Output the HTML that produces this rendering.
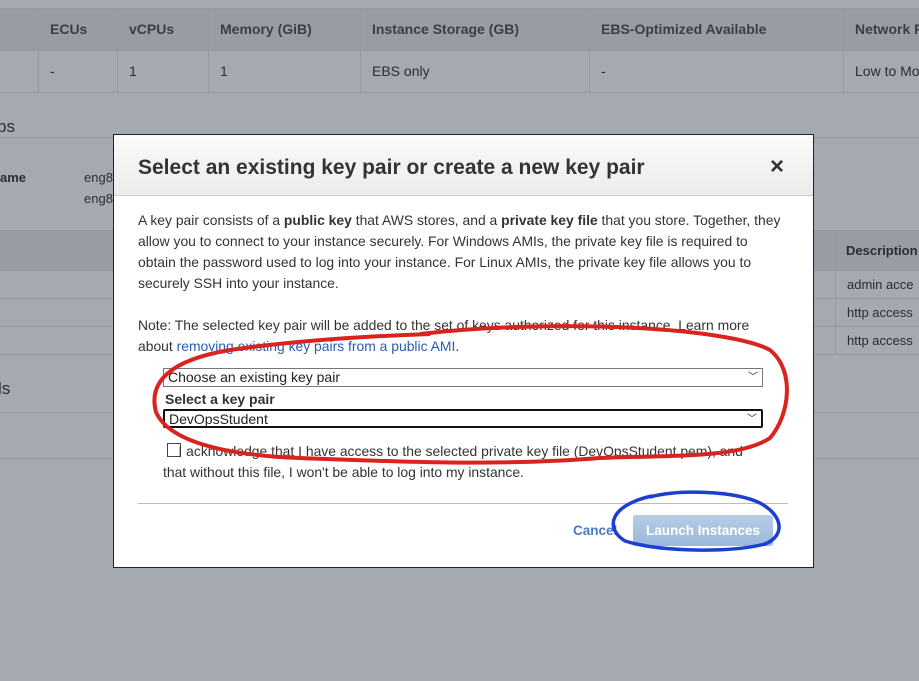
<!DOCTYPE html><html><head><style>
body{margin:0;width:919px;height:681px;background:#a5a9b0;font-family:"Liberation Sans",sans-serif;position:relative;overflow:hidden;font-size:14px;color:#2a2d33}
.a{position:absolute}
.hl{position:absolute;left:0;right:0;height:1px;background:#959aa1}
.vl{position:absolute;width:1px;background:#959aa1}
.modal{position:absolute;left:113px;top:134px;width:699px;height:432px;background:#fff;border:1px solid #222}
.mh{height:60px;background:linear-gradient(#fafafa,#ececec);border-bottom:1px solid #ccc}
.mb{font-size:13.9px;color:#333;line-height:21px;white-space:nowrap}
.sel{position:absolute;left:49px;width:600px;height:19px;border:1px solid #777;font-size:14px;line-height:17px;padding-left:4px;box-sizing:border-box;color:#222}
</style></head><body>
<div class="a" style="left:0;top:8px;width:919px;height:42px;background:#989da5"></div>
<div class="hl" style="top:8px"></div><div class="hl" style="top:50px"></div><div class="hl" style="top:92px"></div>
<div class="vl" style="left:38px;top:8px;height:84px"></div><div class="vl" style="left:117px;top:8px;height:84px"></div><div class="vl" style="left:208px;top:8px;height:84px"></div><div class="vl" style="left:360px;top:8px;height:84px"></div><div class="vl" style="left:589px;top:8px;height:84px"></div><div class="vl" style="left:843px;top:8px;height:84px"></div>
<div class="a" style="top:21px;left:50px;font-weight:bold;color:#3a3e45">ECUs</div>
<div class="a" style="top:21px;left:129px;font-weight:bold;color:#3a3e45">vCPUs</div>
<div class="a" style="top:21px;left:220px;font-weight:bold;color:#3a3e45">Memory (GiB)</div>
<div class="a" style="top:21px;left:372px;font-weight:bold;color:#3a3e45">Instance Storage (GB)</div>
<div class="a" style="top:21px;left:601px;font-weight:bold;color:#3a3e45">EBS-Optimized Available</div>
<div class="a" style="top:21px;left:855px;font-weight:bold;color:#3a3e45;white-space:nowrap">Network Pe</div>
<div class="a" style="top:63px;left:50px">-</div><div class="a" style="top:63px;left:129px">1</div><div class="a" style="top:63px;left:220px">1</div><div class="a" style="top:63px;left:372px">EBS only</div><div class="a" style="top:63px;left:601px">-</div><div class="a" style="top:63px;left:855px;white-space:nowrap">Low to Mo</div>
<div class="a" style="top:117px;left:-3px;font-size:17px">ps</div>
<div class="hl" style="top:137px"></div>
<div class="a" style="top:170px;left:0;font-weight:bold;font-size:13px">ame</div>
<div class="a" style="top:170px;left:84px;font-size:13px">eng8</div><div class="a" style="top:191px;left:84px;font-size:13px">eng8</div>
<div class="a" style="left:0;top:230px;width:919px;height:40px;background:#989da5"></div>
<div class="hl" style="top:230px"></div><div class="hl" style="top:270px"></div><div class="hl" style="top:298px"></div><div class="hl" style="top:326px"></div><div class="hl" style="top:354px"></div>
<div class="vl" style="left:835px;top:230px;height:124px"></div>
<div class="a" style="top:243px;left:846px;font-weight:bold;font-size:13px">Description</div>
<div class="a" style="top:277px;left:847px;font-size:13px">admin acce</div><div class="a" style="top:305px;left:847px;font-size:13px">http access</div><div class="a" style="top:333px;left:847px;font-size:13px">http access</div>
<div class="a" style="top:379px;left:-2px;font-size:17px">ls</div>
<div class="hl" style="top:412px"></div><div class="hl" style="top:458px"></div>
<div class="modal">
<div class="mh"><div class="a" style="left:24px;top:21px;font-size:21px;font-weight:bold;color:#333">Select an existing key pair or create a new key pair</div>
<div class="a" style="left:656px;top:18px;font-size:24px;font-weight:bold;color:#333">×</div></div>
<div class="mb a" style="left:24px;top:75px">A key pair consists of a <b>public key</b> that AWS stores, and a <b>private key file</b> that you store. Together, they<br>allow you to connect to your instance securely. For Windows AMIs, the private key file is required to<br>obtain the password used to log into your instance. For Linux AMIs, the private key file allows you to<br>securely SSH into your instance.</div>
<div class="mb a" style="left:24px;top:180px">Note: The selected key pair will be added to the set of keys authorized for this instance. Learn more<br>about <span style="color:#2a5db0">removing existing key pairs from a public AMI</span>.</div>
<div class="sel" style="top:233px">Choose an existing key pair<span style="position:absolute;right:4px;font-size:10px">﹀</span></div>
<div class="a" style="left:51px;top:256px;font-weight:bold;font-size:14px;color:#333">Select a key pair</div>
<div class="sel" style="top:274px;border:2px solid #111;border-radius:2px">DevOpsStudent<span style="position:absolute;right:4px;font-size:10px">﹀</span></div>
<div class="a" style="left:53px;top:308px;width:12px;height:12px;border:1px solid #444"></div>
<div class="mb a" style="left:49px;top:306px">&nbsp;&nbsp;&nbsp;&nbsp;I acknowledge that I have access to the selected private key file (DevOpsStudent.pem), and<br>that without this file, I won't be able to log into my instance.</div>
<div class="a" style="left:24px;top:368px;width:650px;height:1px;background:#bbb"></div>
<div class="a" style="left:459px;top:388px;font-weight:bold;font-size:13.5px;color:#4a7abf">Cancel</div>
<div class="a" style="left:519px;top:380px;width:140px;height:31px;background:linear-gradient(#b6cde6,#9ab8da);border-radius:3px;color:#fff;font-weight:bold;font-size:13.5px;text-align:center;line-height:31px">Launch Instances</div>
</div>
<svg class="a" style="left:0;top:0" width="919" height="681"><path d="M420 334 C560 318 730 328 770 350 C795 370 790 415 770 438 C740 458 680 455 600 458 C500 466 400 462 300 458 C220 455 168 440 156 412 C148 382 170 360 230 350 C300 340 370 336 430 334" fill="none" stroke="#d9231f" stroke-width="4"/>
<path d="M650 497 C680 489 735 491 760 503 C784 516 785 536 765 544 C730 553 660 552 625 541 C604 528 610 505 652 496" fill="none" stroke="#1b3fd0" stroke-width="3.5"/></svg>
</body></html>
